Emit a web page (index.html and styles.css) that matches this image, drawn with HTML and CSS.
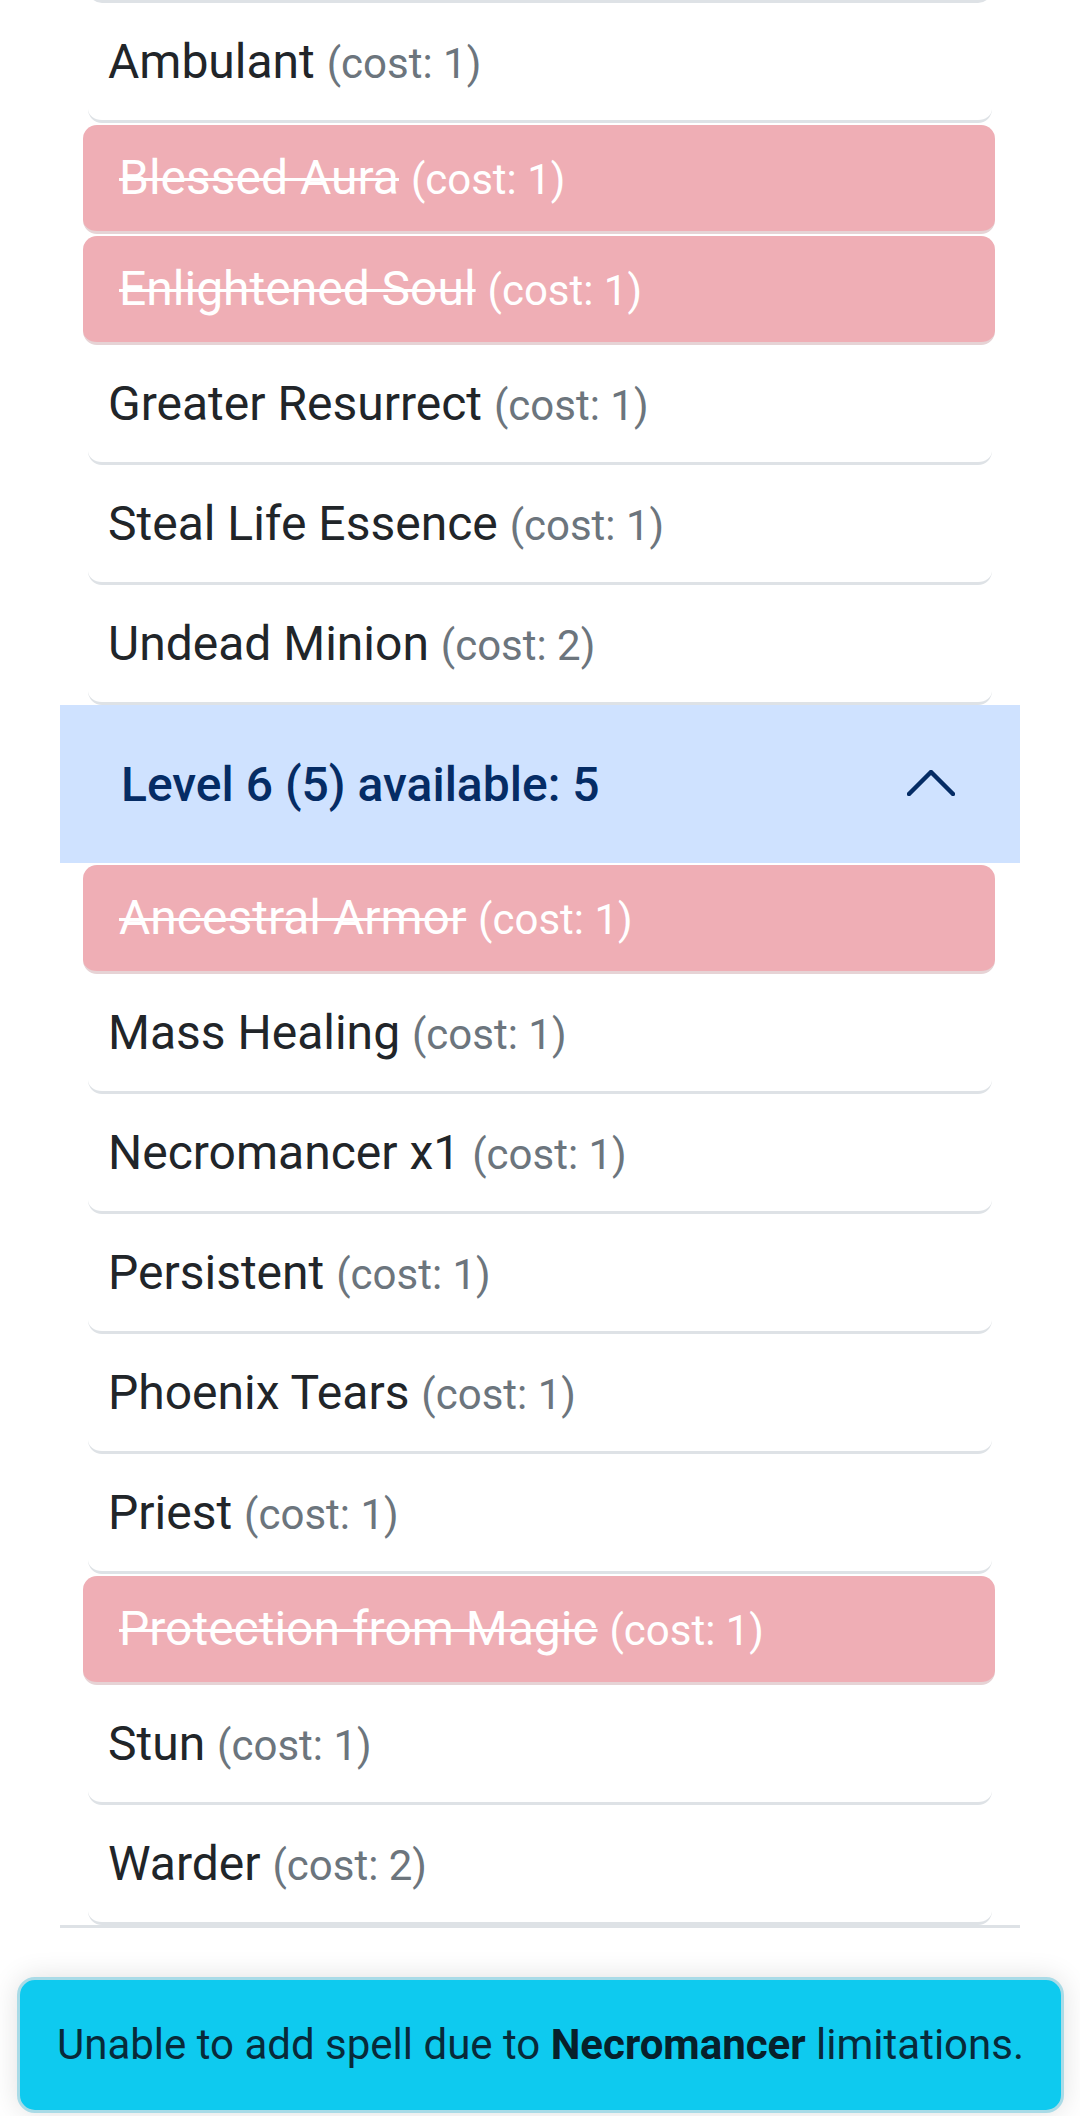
FILE: index.html
```html
<!DOCTYPE html>
<html lang="en">
<head>
<meta charset="utf-8">
<title>Spells</title>
<link rel="stylesheet" href="styles.css">
</head>
<body>
<main class="page">
  <section class="accordion">
    <ul class="spells spells-scrolled">
      <li class="spell spell-hidden"></li>
      <li class="spell"><span class="label">Ambulant <span class="cost">(cost: 1)</span></span></li>
      <li class="spell blocked"><span class="label"><s>Blessed Aura</s> <span class="cost">(cost: 1)</span></span></li>
      <li class="spell blocked"><span class="label"><s>Enlightened Soul</s> <span class="cost">(cost: 1)</span></span></li>
      <li class="spell"><span class="label">Greater Resurrect <span class="cost">(cost: 1)</span></span></li>
      <li class="spell"><span class="label">Steal Life Essence <span class="cost">(cost: 1)</span></span></li>
      <li class="spell"><span class="label">Undead Minion <span class="cost">(cost: 2)</span></span></li>
    </ul>
    <div class="acc-header">
      <span class="acc-title">Level 6 (5) available: 5</span>
      <svg class="chevron" viewBox="0 0 48 26" width="48" height="26" aria-hidden="true">
        <path d="M2 24 L24 2 L46 24" fill="none" stroke="#052c65" stroke-width="4.5" stroke-linecap="round" stroke-linejoin="round"/>
      </svg>
    </div>
    <ul class="spells">
      <li class="spell blocked"><span class="label"><s>Ancestral Armor</s> <span class="cost">(cost: 1)</span></span></li>
      <li class="spell"><span class="label">Mass Healing <span class="cost">(cost: 1)</span></span></li>
      <li class="spell"><span class="label">Necromancer x1 <span class="cost">(cost: 1)</span></span></li>
      <li class="spell"><span class="label">Persistent <span class="cost">(cost: 1)</span></span></li>
      <li class="spell"><span class="label">Phoenix Tears <span class="cost">(cost: 1)</span></span></li>
      <li class="spell"><span class="label">Priest <span class="cost">(cost: 1)</span></span></li>
      <li class="spell blocked"><span class="label"><s>Protection from Magic</s> <span class="cost">(cost: 1)</span></span></li>
      <li class="spell"><span class="label">Stun <span class="cost">(cost: 1)</span></span></li>
      <li class="spell"><span class="label">Warder <span class="cost">(cost: 2)</span></span></li>
    </ul>
  </section>
  <div class="toast" role="alert">
    <p class="toast-text">Unable to add spell due to <strong>Necromancer</strong> limitations.</p>
  </div>
</main>
</body>
</html>
```

FILE: styles.css
```css
* { box-sizing: border-box; }
html, body { margin: 0; padding: 0; background: #ffffff; }
body {
  font-family: Roboto, "Noto Sans", "Liberation Sans", sans-serif;
  color: #212529;
  overflow: hidden;
}
.page {
  width: 1080px;
  height: 2116px;
  overflow: hidden;
}
.accordion {
  margin: 0 60px;
  border-bottom: 3px solid #dee2e6;
}
.spells {
  list-style: none;
  margin: 0;
  padding: 0;
}
.spells-scrolled { margin-top: -117px; }
.spell {
  height: 120px;
  margin: 0 28px;
  padding: 0 20px;
  display: flex;
  align-items: center;
  font-size: 48px;
  line-height: 1;
  background: #fff;
  border-bottom: 3px solid #dee2e6;
  border-radius: 14px;
}
.label { white-space: nowrap; }
.cost {
  color: #6c757d;
  font-size: 42px;
}
.spell.blocked {
  margin: 2px 25px 0 23px;
  height: 109px;
  padding: 0 36px;
  background: #efaeb5;
  color: #ffffff;
  border-bottom: 3px solid #e6d3d5;
  border-radius: 14px;
}
.spell.blocked .cost { color: #ffffff; }
.spell.blocked s {
  text-decoration-thickness: 3px;
}
.acc-header {
  height: 158px;
  background: #cfe2ff;
  color: #052c65;
  display: flex;
  align-items: center;
  justify-content: space-between;
  padding: 0 65px 0 61px;
  font-size: 48px;
  font-weight: 500;
}
.chevron { display: block; margin-top: -2px; }
.toast {
  margin: 49px 16px 0 17px;
  height: 136px;
  background: #0ecaef;
  border: 3px solid #a9dbe7;
  border-radius: 18px;
  box-shadow: 0 0 28px rgba(0, 0, 0, 0.12);
  display: flex;
  align-items: center;
  justify-content: center;
  color: #082a3a;
}
.toast-text {
  margin: 0;
  font-size: 42px;
  line-height: 1.2;
  white-space: nowrap;
}
.toast-text strong { font-weight: 700; color: #07202b; }
```
